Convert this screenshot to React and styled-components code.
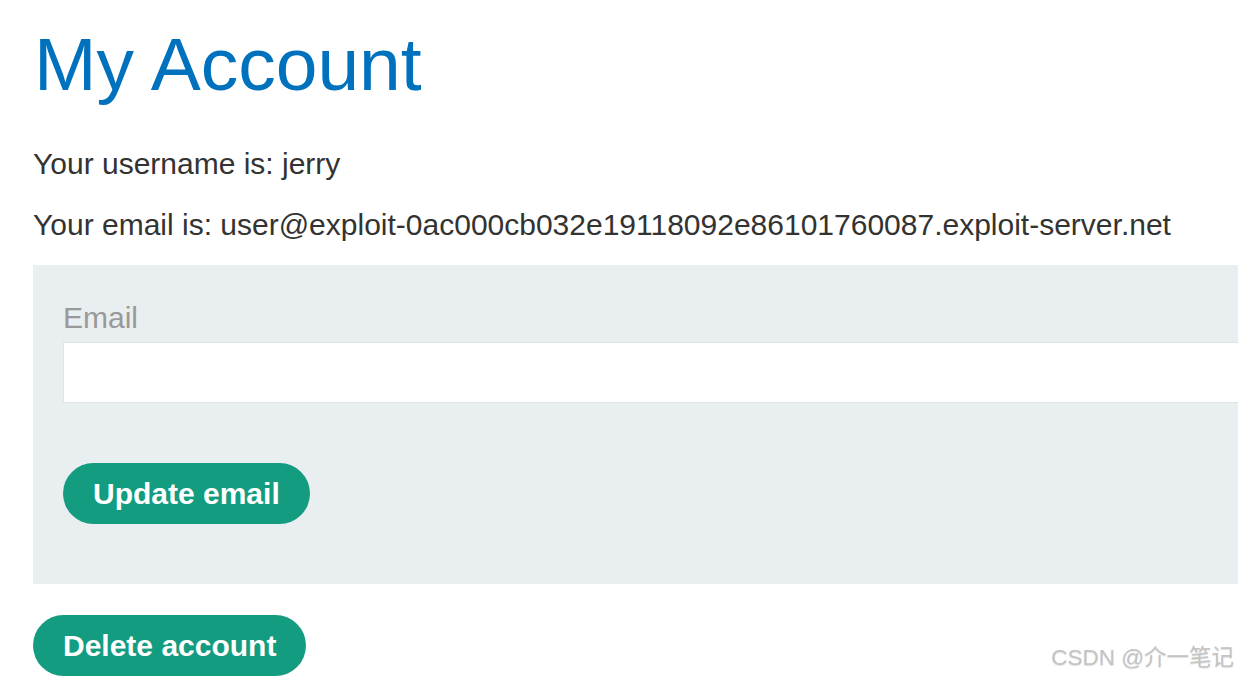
import styled, { createGlobalStyle } from 'styled-components';

const Global = createGlobalStyle`
  html, body {
    margin: 0;
    padding: 0;
    background: #fff;
    overflow: hidden;
  }
  body {
    font-family: "Liberation Sans", Arial, sans-serif;
    color: #333332;
  }
`;

const Page = styled.div`
  position: relative;
  width: 1238px;
  height: 677px;
  padding: 0 0 0 33px;
  box-sizing: border-box;
  overflow: hidden;
`;

const Title = styled.h1`
  margin: 0;
  padding-top: 19px;
  padding-left: 1px;
  font-size: 75px;
  font-weight: 400;
  line-height: 90px;
  color: #0071bc;
`;

const Line = styled.p`
  margin: 0;
  font-size: 30px;
  line-height: 36px;
  margin-top: ${(p) => p.gap}px;
`;

const Panel = styled.form`
  margin-top: 22px;
  width: 1260px;
  background: #e9eef1;
  padding: 35px 0 60px 30px;
  box-sizing: border-box;
`;

const Label = styled.label`
  display: block;
  font-size: 30px;
  line-height: 36px;
  color: #999999;
`;

const Input = styled.input`
  display: block;
  width: 100%;
  height: 61px;
  margin-top: 6px;
  border: 1px solid #e1e4e6;
  background: #fff;
  box-sizing: border-box;
`;

const Button = styled.button`
  display: block;
  height: 61px;
  padding: 0 30px;
  border: none;
  border-radius: 31px;
  background: #139c80;
  color: #fff;
  font-family: "Liberation Sans", Arial, sans-serif;
  font-weight: 700;
  font-size: 30px;
  margin-top: ${(p) => p.gap}px;
`;

const Mark = styled.div`
  position: absolute;
  right: 4px;
  bottom: 6px;
  font-family: "Liberation Sans", "Noto Sans CJK SC", sans-serif;
  font-size: 22.5px;
  color: #c4c4c4;
  text-shadow: 0 1px 1px rgba(0, 0, 0, 0.12);
`;

export default function App() {
  return (
    <Page>
      <Global />
      <Title>My Account</Title>
      <Line gap={37}>Your username is: jerry</Line>
      <Line gap={25}>
        Your email is: user@exploit-0ac000cb032e19118092e86101760087.exploit-server.net
      </Line>
      <Panel onSubmit={(e) => e.preventDefault()}>
        <Label>Email</Label>
        <Input type="email" />
        <Button gap={60}>Update email</Button>
      </Panel>
      <Button gap={31}>Delete account</Button>
      <Mark>CSDN @介一笔记</Mark>
    </Page>
  );
}
